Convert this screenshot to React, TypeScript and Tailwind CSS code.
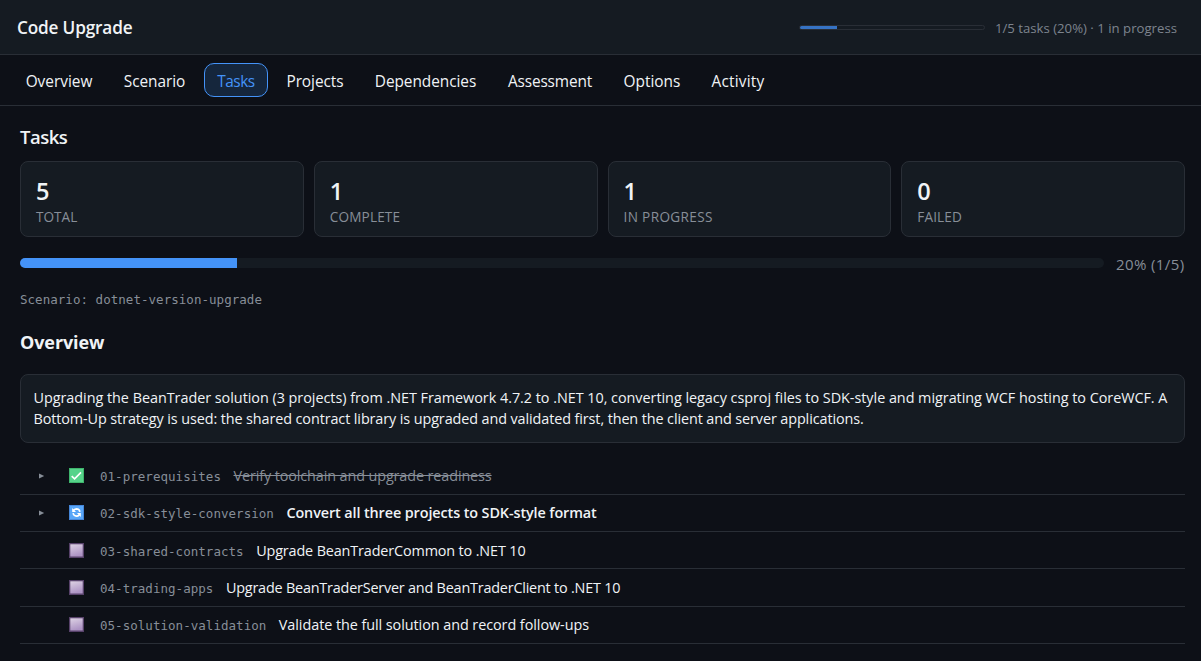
import React from "react";

const mono = "font-['DejaVu_Sans_Mono',monospace] text-[12.5px] tracking-[0.035px] text-[#878e98]";

const tabs = [
  { label: "Overview", cls: "w-[92px]" },
  { label: "Scenario", cls: "w-[87px] tracking-[-0.05px]" },
  { label: "Tasks", cls: "w-[64px] tracking-[-0.5px]", active: true },
  { label: "Projects", cls: "w-[82px] tracking-[-0.05px]" },
  { label: "Dependencies", cls: "w-[127px] tracking-[-0.05px]" },
  { label: "Assessment", cls: "w-[110px] tracking-[-0.15px]" },
  { label: "Options", cls: "w-[82px]" },
  { label: "Activity", cls: "w-[78px] tracking-[0.2px]" },
];

const stats = [
  { value: "5", label: "TOTAL", cls: "" },
  { value: "1", label: "COMPLETE", cls: "tracking-[0.15px]" },
  { value: "1", label: "IN PROGRESS", cls: "tracking-[0.35px]" },
  { value: "0", label: "FAILED", cls: "tracking-[0.15px]" },
];

function CheckIcon() {
  return (
    <svg width="15" height="15" viewBox="0 0 15 15" className="shrink-0">
      <rect width="15" height="15" fill="#3fb56d" />
      <rect x="1" y="1" width="13" height="13" fill="#56d38a" />
      <path d="M2.7 8.1 5.6 10.9 12 4.4" fill="none" stroke="#fff" strokeWidth="1.6" />
    </svg>
  );
}

function SyncIcon() {
  return (
    <svg width="15" height="15" viewBox="0 0 15 15" className="mb-px shrink-0">
      <rect width="15" height="15" fill="#4586d8" />
      <rect x="1" y="1" width="13" height="13" fill="#58a6f8" />
      <path d="M4.6 5.2Q6 3.9 7.6 3.9 10.4 4 10.9 6.8" fill="none" stroke="#fff" strokeWidth="1.6" />
      <path d="M3.2 3V7H7Z" fill="#fff" />
      <path d="M10.4 9.8Q9 11.1 7.4 11.1 4.6 11 4.1 8.2" fill="none" stroke="#fff" strokeWidth="1.6" />
      <path d="M11.8 12V8H8Z" fill="#fff" />
    </svg>
  );
}

function PendingIcon() {
  return (
    <svg width="15" height="15" viewBox="0 0 15 15" className="mb-px shrink-0">
      <defs>
        <linearGradient id="pending" x1="0" y1="0" x2="0.3" y2="1">
          <stop offset="0" stopColor="#ddd2e4" />
          <stop offset="1" stopColor="#ad94c4" />
        </linearGradient>
      </defs>
      <rect width="15" height="15" fill="#57426a" />
      <rect x="1.3" y="1.3" width="12.4" height="12.2" fill="url(#pending)" />
    </svg>
  );
}

const tasks = [
  { id: "01-prerequisites", title: "Verify toolchain and upgrade readiness", icon: <CheckIcon />, open: true, row: "h-[38px]", cls: "tracking-[-0.11px] text-[#878e98] line-through" },
  { id: "02-sdk-style-conversion", title: "Convert all three projects to SDK-style format", icon: <SyncIcon />, open: true, row: "h-[37px]", cls: "tracking-[-0.1px] font-semibold" },
  { id: "03-shared-contracts", title: "Upgrade BeanTraderCommon to .NET 10", icon: <PendingIcon />, open: false, row: "h-[37px] pt-px", cls: "tracking-[-0.14px]" },
  { id: "04-trading-apps", title: "Upgrade BeanTraderServer and BeanTraderClient to .NET 10", icon: <PendingIcon />, open: false, row: "h-[38px]", cls: "tracking-[-0.2px]" },
  { id: "05-solution-validation", title: "Validate the full solution and record follow-ups", icon: <PendingIcon />, open: false, row: "h-[37px]", cls: "tracking-[-0.06px]" },
];

export default function App() {
  return (
    <div className="flex h-[661px] flex-col overflow-hidden bg-[#0d1017] font-['Open_Sans','Noto_Sans',sans-serif] text-[#f0f3f6]">
      <header className="flex h-[55px] shrink-0 items-center justify-between border-b border-[#292e36] bg-[#151b22] pt-[2px] pr-6 pl-[17px]">
        <h1 className="text-[17.2px] font-semibold tracking-[-0.17px]">Code Upgrade</h1>
        <div className="flex items-center gap-[10px]">
          <div className="h-[5px] w-[186px] overflow-hidden rounded-full border border-[#292e36]">
            <div className="h-full w-1/5 bg-[#3673c4]" />
          </div>
          <span className="pt-px text-[13.2px] text-[#7d848e]">1/5 tasks (20%) · 1 in progress</span>
        </div>
      </header>

      <nav className="flex h-[51px] shrink-0 items-center gap-[6px] border-b border-[#292e36] pl-[13px] text-[15.4px]">
        {tabs.map((t) => (
          <button
            key={t.label}
            className={`flex h-[34px] items-center justify-center rounded-[10px] border pt-[4px] ${t.cls} ${
              t.active ? "border-[#4493f8] bg-[#15263c] text-[#4493f8]" : "border-transparent"
            }`}
          >
            {t.label}
          </button>
        ))}
      </nav>

      <main className="flex flex-col pr-4 pl-5">
        <h2 className="mt-[18px] h-[26px] text-[18.5px] leading-[26px] font-semibold tracking-[-0.5px]">Tasks</h2>
        <div className="mt-[11px] grid h-[76px] grid-cols-4 gap-[10px]">
          {stats.map((s) => (
            <div key={s.label} className="rounded-lg border border-[#292e36] bg-[#151b22] pt-[14px] pl-[15px]">
              <div className="text-[23.5px] leading-[30px] font-semibold">{s.value}</div>
              <div className={`text-[13.6px] leading-[22px] text-[#878e98] ${s.cls}`}>{s.label}</div>
            </div>
          ))}
        </div>

        <div className="mt-[16px] flex h-[22px] items-center gap-3">
          <div className="mb-[2px] h-[10px] flex-1 overflow-hidden rounded-full bg-[#151b22]">
            <div className="h-full w-1/5 bg-[#4493f8]" />
          </div>
          <span className="w-[69px] text-[15px] leading-[22px] tracking-[0.4px] whitespace-nowrap text-[#878e98]">20% (1/5)</span>
        </div>

        <p className={`mt-[15px] leading-[20px] ${mono}`}>Scenario: dotnet-version-upgrade</p>
        <h2 className="mt-[19px] text-[18px] leading-[26px] font-bold tracking-[-0.1px]">Overview</h2>

        <div className="mt-[19px] h-[69px] rounded-lg border border-[#292e36] bg-[#151b22] pt-[12px] pl-[12.5px] text-[14.4px] leading-[21.4px] whitespace-nowrap">
          <p className="tracking-[-0.032px]">
            Upgrading the BeanTrader solution (3 projects) from .NET Framework 4.7.2 to .NET 10, converting legacy csproj files to SDK-style and migrating WCF hosting to CoreWCF. A
          </p>
          <p className="tracking-[-0.1px]">
            Bottom-Up strategy is used: the shared contract library is upgraded and validated first, then the client and server applications.
          </p>
        </div>

        <ul className="mt-[14px]">
          {tasks.map((t) => (
            <li key={t.id} className={`flex items-center border-b border-[#292e36] pl-[18px] ${t.row}`}>
              <span className="flex w-[31px] shrink-0">
                {t.open && (
                  <svg width="6" height="6" viewBox="0 0 6 6" className="ml-px">
                    <path d="M0 0.6 5.2 3 0 5.4Z" fill="#878e98" />
                  </svg>
                )}
              </span>
              {t.icon}
              <span className={`ml-[16px] pt-[3px] ${mono}`}>{t.id}</span>
              <span className={`ml-[12.5px] text-[14.4px] ${t.cls}`}>{t.title}</span>
            </li>
          ))}
        </ul>
      </main>
    </div>
  );
}
